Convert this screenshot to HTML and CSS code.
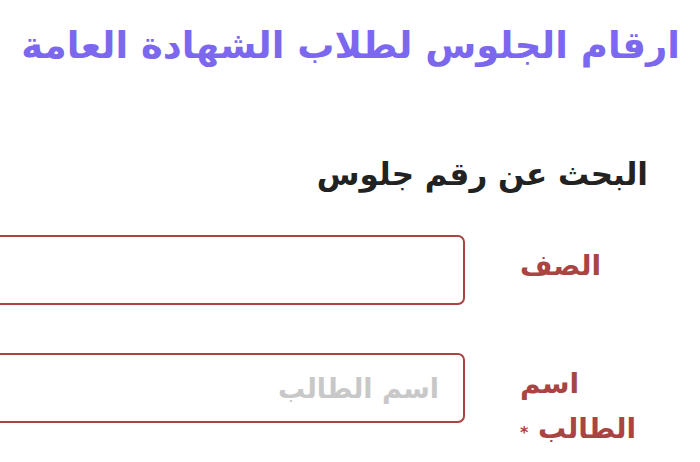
FILE: index.html
```html
<!DOCTYPE html>
<html lang="ar" dir="rtl">
<head>
<meta charset="utf-8">
<link rel="stylesheet" href="styles.css">
</head>
<body>
<div class="page">
  <h1 class="title">ارقام الجلوس لطلاب الشهادة العامة</h1>
  <h2 class="subtitle">البحث عن رقم جلوس</h2>
  <form class="form">
    <div class="row">
      <label class="label">الصف</label>
      <input class="field" type="text">
    </div>
    <div class="row">
      <label class="label">اسم <span class="nowrap">الطالب <span class="req">*</span></span></label>
      <input class="field" type="text" placeholder="اسم الطالب">
    </div>
  </form>
</div>
</body>
</html>
```
FILE: styles.css
```css
html, body {
  margin: 0;
  padding: 0;
  background: #ffffff;
  overflow: hidden;
}
body {
  font-family: "DejaVu Sans", "Noto Sans", sans-serif;
  width: 700px;
  height: 462px;
}
.page {
  padding: 22px 20px 0 0;
}
.title {
  margin: 0;
  font-size: 37px;
  font-weight: bold;
  color: #7b68ee;
  line-height: 48px;
  white-space: nowrap;
}
.subtitle {
  margin: 84px 32px 0 0;
  font-size: 31px;
  font-weight: bold;
  color: #222;
  line-height: 40px;
}
.form {
  margin-top: 41px;
  padding-right: 40px;
}
.row {
  display: flex;
  align-items: flex-start;
  gap: 55px;
  margin-bottom: 48px;
}
.label {
  flex: 0 0 120px;
  text-align: left;
  font-size: 28px;
  font-weight: bold;
  color: #a94442;
  line-height: 45px;
  padding-top: 8px;
}
.nowrap {
  white-space: nowrap;
}
.req {
  font-size: 16px;
}
.field {
  flex: 0 0 auto;
  width: 520px;
  height: 70px;
  box-sizing: border-box;
  border: 2px solid #a94442;
  border-radius: 7px;
  padding: 0 24px;
  font-family: inherit;
  font-size: 27px;
  font-weight: bold;
  background: #fff;
  outline: none;
}
.field::placeholder {
  color: #c8c8c8;
}
```
